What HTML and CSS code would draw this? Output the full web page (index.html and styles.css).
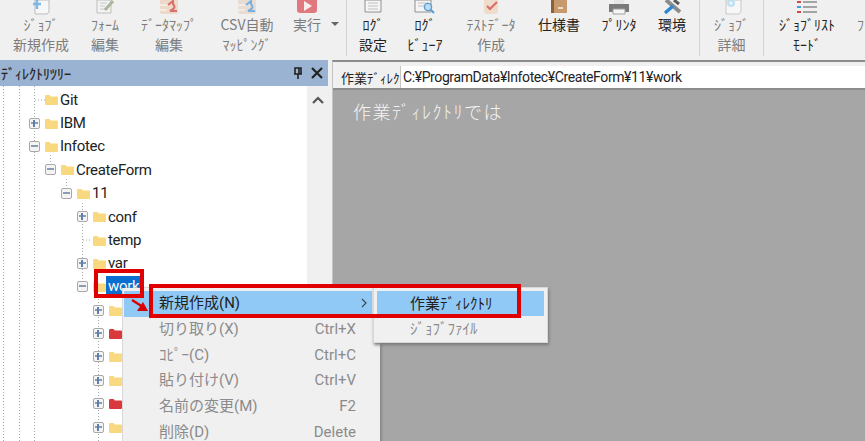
FILE: index.html
```html
<!DOCTYPE html>
<html lang="ja">

<head>
    <meta charset="UTF-8">
    <title>ｼﾞｮﾌﾞ管理</title>
    <link rel="stylesheet" href="styles.css">
</head>

<body>
    <svg class="defs" width="0" height="0">
        <symbol id="folder" viewBox="0 0 13 11">
            <path d="M0 2.2 Q0 1 1.2 1 H4.6 L5.8 2.4 H12 Q13 2.4 13 3.4 V10 Q13 11 12 11 H1 Q0 11 0 10 Z" fill="currentColor"/>
        </symbol>
    </svg>

    <!-- Toolbar -->
    <div class="toolbar">
        <div class="tool t-new off">
            <svg width="24" height="15" viewBox="0 0 24 15"><path d="M6 0H20V12L18 14H6Z" fill="#f7f7f7" stroke="#bdbdbd"/><path d="M8 0V9M4 4H12" stroke="#7db7e8" stroke-width="2.4"/></svg>
            <span>ｼﾞｮﾌﾞ</span><span>新規作成</span>
        </div>
        <div class="tool t-form off">
            <svg width="24" height="15" viewBox="0 0 24 15"><path d="M4 0H18V13H4Z" fill="#f3f3f3" stroke="#bdbdbd"/><path d="M7 3H14M7 6H12M7 9H12" stroke="#c8c8c8"/><path d="M12 10L20 1" stroke="#a9b79a" stroke-width="3"/></svg>
            <span>ﾌｫｰﾑ</span><span>編集</span>
        </div>
        <div class="tool t-map off">
            <svg width="24" height="15" viewBox="0 0 24 15"><path d="M3 0H21V12Q21 14 19 14H5Q3 14 3 12Z" fill="#ecd9c8"/><path d="M3 5H12M3 10H10" stroke="#f7f1ea" stroke-width="1.5"/><path d="M11 5L16 1V4Q20 8 13 11H20" fill="none" stroke="#dc6d68" stroke-width="2"/></svg>
            <span>ﾃﾞｰﾀﾏｯﾌﾟ</span><span>編集</span>
        </div>
        <div class="tool t-csv off">
            <svg width="24" height="15" viewBox="0 0 24 15"><path d="M3 0H21V12Q21 14 19 14H5Q3 14 3 12Z" fill="#e8ddd2"/><path d="M3 5H12M3 10H10" stroke="#f7f1ea" stroke-width="1.5"/><path d="M11 5L16 1V4Q20 8 13 11H20" fill="none" stroke="#79afe2" stroke-width="2"/></svg>
            <span>CSV自動</span><span>ﾏｯﾋﾟﾝｸﾞ</span>
        </div>
        <div class="tool t-run off">
            <svg width="24" height="15" viewBox="0 0 24 15"><path d="M2 0H22V10Q22 13 19 13H5Q2 13 2 10Z" fill="#e2787f"/><path d="M9 1L17 6L9 11Z" fill="#f8eeee"/></svg>
            <span>実行</span>
        </div>
        <div class="drop"><i></i></div>
        <div class="sep"></div>
        <div class="tool t-log">
            <svg width="24" height="15" viewBox="0 0 24 15"><path d="M4 0H20V12H4Z" fill="#f5f5f5" stroke="#8f8f8f"/><path d="M7 3H17M7 6H17M7 9H17" stroke="#c0c0c0"/></svg>
            <span>ﾛｸﾞ</span><span>設定</span>
        </div>
        <div class="tool t-view">
            <svg width="24" height="15" viewBox="0 0 24 15"><path d="M2 0H18V12H2Z" fill="#f5f5f5" stroke="#8f8f8f"/><path d="M5 3H15M5 6H11" stroke="#c0c0c0"/><circle cx="15" cy="7" r="3.6" fill="#bcdcf2" stroke="#5b9bd0" stroke-width="1.4"/><path d="M18 10L21 13" stroke="#5b9bd0" stroke-width="2"/></svg>
            <span>ﾛｸﾞ</span><span>ﾋﾞｭｰｱ</span>
        </div>
        <div class="tool t-test off">
            <svg width="24" height="15" viewBox="0 0 24 15"><path d="M5 0H19V11Q19 14 16 14H8Q5 14 5 11Z" fill="#efdccb"/><path d="M8 6L11 9L18 2" fill="none" stroke="#dc6d68" stroke-width="2.2"/></svg>
            <span>ﾃｽﾄﾃﾞｰﾀ</span><span>作成</span>
        </div>
        <div class="tool t-spec">
            <svg width="24" height="15" viewBox="0 0 24 15"><path d="M4 0H20V13H4Z" fill="#c69a6d"/><path d="M4 0H7V13H4Z" fill="#8f6236"/><path d="M11 7H16V9H11Z" fill="#ecdcc8"/></svg>
            <span>仕様書</span>
        </div>
        <div class="tool t-print">
            <svg width="24" height="15" viewBox="0 0 24 15"><path d="M7 0H17V4H7Z" fill="#e6e6e6"/><path d="M2 4H22V12H2Z" fill="#7a7a7a"/><path d="M6 9H18V14H6Z" fill="#f5f5f5" stroke="#a0a0a0"/></svg>
            <span>ﾌﾟﾘﾝﾀ</span>
        </div>
        <div class="tool t-env">
            <svg width="24" height="15" viewBox="0 0 24 15"><path d="M6 0L20 12" stroke="#8b8b8b" stroke-width="4"/><path d="M13 6L5 13" stroke="#2f86d2" stroke-width="3.4"/><path d="M14 0L19 4" stroke="#5a5a5a" stroke-width="3"/></svg>
            <span>環境</span>
        </div>
        <div class="sep"></div>
        <div class="tool t-detail off">
            <svg width="24" height="15" viewBox="0 0 24 15"><path d="M6 0H21V12L19 14H6Z" fill="#f7f7f7" stroke="#c8c8c8"/><circle cx="11" cy="3" r="4" fill="#bfe0f5"/><circle cx="11" cy="3" r="1.5" fill="#f7f7f7"/></svg>
            <span>ｼﾞｮﾌﾞ</span><span>詳細</span>
        </div>
        <div class="sep"></div>
        <div class="tool t-list">
            <svg width="24" height="15" viewBox="0 0 24 15"><path d="M2 1H6V3H2Z" fill="#d8434a"/><path d="M2 6H6V8H2Z" fill="#3f9de0"/><path d="M2 11H6V13H2Z" fill="#d8434a"/><path d="M8 2H22M8 7H22M8 12H22" stroke="#8a8a8a" stroke-width="1.4"/></svg>
            <span>ｼﾞｮﾌﾞﾘｽﾄ</span><span>ﾓｰﾄﾞ</span>
        </div>
        <div class="tool t-more off">
            <span>ﾌ</span>
        </div>
    </div>

    <div class="main">
        <!-- Directory tree -->
        <div class="tree-panel">
            <div class="panel-head">
                <span class="panel-title">ﾃﾞｨﾚｸﾄﾘﾂﾘｰ</span>
                <svg class="pin" width="10" height="12" viewBox="0 0 10 12"><path d="M2 1H8V7H2ZM1 7H9M5 7V12M6 1V7" fill="none" stroke="#222" stroke-width="1.6"/></svg>
                <svg class="close" width="12" height="12" viewBox="0 0 12 12"><path d="M1 1L11 11M11 1L1 11" stroke="#222" stroke-width="2.2"/></svg>
            </div>
            <div class="panel-body">
                <div class="tree">
                    <svg class="tree-lines" width="307" height="355">
                        <path d="M3.5 0V355M19.5 0V355M34.5 0V355M50.5 69V80M66.5 93V103M82.5 117V200M98.5 210V355M35 14H45M83 154H92"/>
                    </svg>
                    <div class="row lv1"><i class="box none"></i><svg class="folder"><use href="#folder"/></svg><span>Git</span></div>
                    <div class="row lv1"><i class="box plus"></i><svg class="folder"><use href="#folder"/></svg><span>IBM</span></div>
                    <div class="row lv1"><i class="box minus"></i><svg class="folder"><use href="#folder"/></svg><span>Infotec</span></div>
                    <div class="row lv2"><i class="box minus"></i><svg class="folder"><use href="#folder"/></svg><span>CreateForm</span></div>
                    <div class="row lv3"><i class="box minus"></i><svg class="folder"><use href="#folder"/></svg><span>11</span></div>
                    <div class="row lv4"><i class="box plus"></i><svg class="folder"><use href="#folder"/></svg><span>conf</span></div>
                    <div class="row lv4"><i class="box none"></i><svg class="folder"><use href="#folder"/></svg><span>temp</span></div>
                    <div class="row lv4"><i class="box plus"></i><svg class="folder"><use href="#folder"/></svg><span>var</span></div>
                    <div class="row lv4 selected"><i class="box minus"></i><svg class="folder"><use href="#folder"/></svg><span>work</span></div>
                    <div class="row lv5"><i class="box plus"></i><svg class="folder"><use href="#folder"/></svg></div>
                    <div class="row lv5"><i class="box plus"></i><svg class="folder red"><use href="#folder"/></svg></div>
                    <div class="row lv5"><i class="box plus"></i><svg class="folder"><use href="#folder"/></svg></div>
                    <div class="row lv5"><i class="box plus"></i><svg class="folder"><use href="#folder"/></svg></div>
                    <div class="row lv5"><i class="box plus"></i><svg class="folder red"><use href="#folder"/></svg></div>
                    <div class="row lv5"><i class="box plus"></i><svg class="folder"><use href="#folder"/></svg></div>
                </div>
                <div class="scrollbar">
                    <svg width="14" height="9" viewBox="0 0 14 9"><path d="M2 7L7 2L12 7" fill="none" stroke="#555" stroke-width="2.2"/></svg>
                </div>
            </div>
        </div>

        <!-- Work directory -->
        <div class="work-pane">
            <div class="path-bar">
                <label class="path-label">作業ﾃﾞｨﾚｸ</label>
                <div class="path-input">C:¥ProgramData¥Infotec¥CreateForm¥11¥work</div>
            </div>
            <div class="work-area">作業ﾃﾞｨﾚｸﾄﾘでは</div>
        </div>
    </div>

    <!-- Context menu -->
    <div class="menu">
        <div class="menu-item active sub"><span>新規作成(N)</span><svg width="6" height="10" viewBox="0 0 6 10"><path d="M1 1L5 5L1 9" fill="none" stroke="#444" stroke-width="1.1"/></svg></div>
        <div class="menu-item"><span>切り取り(X)</span><span>Ctrl+X</span></div>
        <div class="menu-item"><span>ｺﾋﾟｰ(C)</span><span>Ctrl+C</span></div>
        <div class="menu-item"><span>貼り付け(V)</span><span>Ctrl+V</span></div>
        <div class="menu-item"><span>名前の変更(M)</span><span>F2</span></div>
        <div class="menu-item"><span>削除(D)</span><span>Delete</span></div>
    </div>

    <div class="submenu">
        <div class="submenu-item active">作業ﾃﾞｨﾚｸﾄﾘ</div>
        <div class="submenu-item">ｼﾞｮﾌﾞﾌｧｲﾙ</div>
    </div>

    <!-- Annotations -->
    <div class="mark mark-work"></div>
    <div class="mark mark-menu"></div>
    <svg class="mark-arrow" width="20" height="16" viewBox="0 0 20 16">
        <path d="M1 1L12 8" stroke="#d80000" stroke-width="2.4"/>
        <path d="M17 12L6 12L12 3Z" fill="#d80000"/>
    </svg>
</body>

</html>
```

FILE: styles.css
```css
* {
    box-sizing: border-box;
}

body {
    margin: 0;
    width: 865px;
    height: 441px;
    position: relative;
    overflow: hidden;
    background-color: #f0f0f0;
    color: #222;
    font-family: Roboto, "Noto Sans CJK JP", sans-serif;
}

.defs {
    position: absolute;
}

/* Toolbar */
.toolbar {
    display: flex;
    height: 60px;
    padding-left: 10px;
    font-family: "Noto Sans CJK JP", sans-serif;
    font-size: 14px;
    line-height: 20px;
    white-space: nowrap;
}

.tool {
    display: flex;
    flex-direction: column;
    align-items: center;
    flex-shrink: 0;
}

.tool svg {
    display: block;
    flex-shrink: 0;
    margin-bottom: -1px;
}

.off {
    color: #7d7d7d;
}

.t-new { width: 62px; }
.t-form { width: 66px; }
.t-map { width: 62px; }
.t-csv { width: 94px; }
.t-run { width: 26px; }
.t-log { width: 52px; }
.t-view { width: 52px; }
.t-test { width: 80px; }
.t-spec { width: 56px; }
.t-print { width: 64px; }
.t-env { width: 42px; margin-right: 6px; }
.t-detail { width: 63px; }
.t-list { width: 86px; }
.t-more { width: 14px; padding: 14px 0 0 7px; align-items: flex-start; }

.drop {
    width: 26px;
    flex-shrink: 0;
    padding: 22px 0 0 11px;
}

.drop i {
    display: block;
    width: 0;
    height: 0;
    border-left: 4px solid transparent;
    border-right: 4px solid transparent;
    border-top: 4px solid #666;
}

.sep {
    width: 1px;
    height: 56px;
    flex-shrink: 0;
    background-color: #d2d2d2;
}

/* Main area */
.main {
    display: flex;
    height: 381px;
}

.tree-panel {
    width: 330px;
    flex-shrink: 0;
    display: flex;
    flex-direction: column;
}

.panel-head {
    display: flex;
    align-items: center;
    height: 26px;
    margin-right: 2px;
    padding: 0 5px 0 1px;
    background-color: #9ab3d2;
    font-family: "Noto Sans CJK JP", sans-serif;
    font-size: 14px;
}

.panel-title {
    flex: 1;
    -webkit-text-stroke: 0.2px #222;
}

.pin {
    margin-right: 8px;
}

.panel-body {
    display: flex;
    flex: 1;
    min-height: 0;
}

.tree {
    position: relative;
    width: 307px;
    padding-top: 2px;
    background-color: #fff;
    font-size: 15px;
    letter-spacing: -0.3px;
    overflow: hidden;
}

.tree-lines {
    position: absolute;
    left: 0;
    top: 0;
}

.tree-lines path {
    fill: none;
    stroke: #a8a8a8;
    stroke-dasharray: 1 2;
}

.row {
    position: relative;
    display: flex;
    align-items: center;
    height: 23.4px;
}

.lv1 { padding-left: 29px; }
.lv2 { padding-left: 45px; }
.lv3 { padding-left: 61px; }
.lv4 { padding-left: 77px; }
.lv5 { padding-left: 93px; }

.box {
    position: relative;
    width: 11px;
    height: 11px;
    margin-right: 5px;
    flex-shrink: 0;
    border: 1px solid #a9a9a9;
    border-radius: 2px;
    background-color: #f4f4f4;
}

.box.none {
    visibility: hidden;
}

.box::before {
    content: "";
    position: absolute;
    left: 1px;
    right: 1px;
    top: 3px;
    height: 2px;
    background-color: #8d9bb0;
}

.box.plus::after {
    content: "";
    position: absolute;
    top: 1px;
    bottom: 1px;
    left: 3px;
    width: 2px;
    background-color: #5f7fb0;
}

.folder {
    width: 13px;
    height: 11px;
    margin-right: 2px;
    flex-shrink: 0;
    color: #f8d97f;
}

.folder.red {
    color: #d9383c;
}

.selected span {
    margin-left: -2px;
    padding: 0 3px 0 2px;
    line-height: 21px;
    background-color: #0a6fd0;
    color: #fff;
}

.scrollbar {
    width: 23px;
    padding: 10px 0 0 4px;
    background-color: #f0f0f0;
}

.scrollbar svg {
    display: block;
}

/* Work pane */
.work-pane {
    flex: 1;
    margin-left: 2px;
    display: flex;
    flex-direction: column;
    border-top: 2px solid #8c8c8c;
    border-left: 1px solid #c4c4c4;
}

.path-bar {
    display: flex;
    align-items: flex-end;
    height: 28px;
    padding: 4px 0 0 8px;
    border-bottom: 2px solid #8c8c8c;
}

.path-label {
    width: 59px;
    flex-shrink: 0;
    white-space: nowrap;
    font-family: "Noto Sans CJK JP", sans-serif;
    font-size: 13px;
    line-height: 20px;
}

.path-input {
    flex: 1;
    height: 22px;
    padding-left: 2px;
    border-left: 1px solid #c4c4c4;
    background-color: #fff;
    font-size: 14px;
    line-height: 22px;
    letter-spacing: -0.4px;
}

.work-area {
    flex: 1;
    padding: 8px 0 0 20px;
    background-color: #a6a6a6;
    color: #f4f4f4;
    font-family: "Noto Sans CJK JP", sans-serif;
    font-size: 18px;
    font-weight: 300;
    line-height: 26px;
    letter-spacing: 1.5px;
}

/* Menus */
.menu {
    position: absolute;
    left: 122px;
    top: 288px;
    width: 258px;
    height: 160px;
    padding: 3px 8px 0 1px;
    background-color: #f0f0f0;
    border-left: 1px solid #d8d8d8;
    box-shadow: 2px 0 2px #8a8a8a;
    font-size: 15px;
    line-height: 20px;
    color: #8b8b8b;
}

.menu-item {
    display: flex;
    justify-content: space-between;
    align-items: center;
    height: 25.7px;
    padding: 0 16px 1px 35px;
    white-space: nowrap;
}

.menu-item.active {
    background-color: #90c8f6;
    color: #222;
}

.menu-item.sub {
    padding-right: 5px;
}

.submenu {
    position: absolute;
    left: 373px;
    top: 287px;
    width: 175px;
    height: 56px;
    padding: 3px;
    background-color: #f0f0f0;
    border: 1px solid #d8d8d8;
    box-shadow: 1px 2px 3px #7a7a7a;
    font-family: "Noto Sans CJK JP", sans-serif;
    font-size: 15px;
    color: #8b8b8b;
}

.submenu-item {
    height: 25px;
    padding-left: 33px;
    line-height: 24px;
}

.submenu-item.active {
    background-color: #90c8f6;
    color: #222;
}

/* Red annotation boxes */
.mark {
    position: absolute;
    border: 4px solid #e00000;
}

.mark-work {
    left: 94px;
    top: 269px;
    width: 50px;
    height: 29px;
}

.mark-menu {
    left: 149px;
    top: 284px;
    width: 372px;
    height: 34px;
}

.mark-arrow {
    position: absolute;
    left: 131px;
    top: 299px;
}
```
